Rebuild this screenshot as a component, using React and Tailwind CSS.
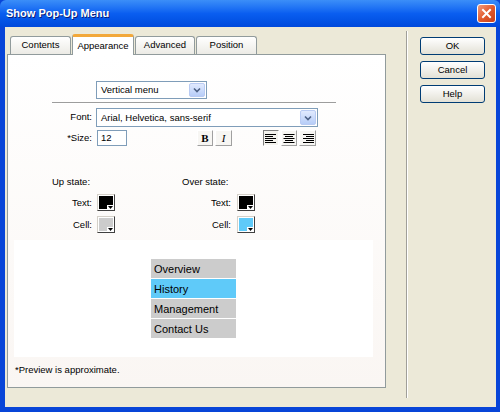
import React from "react";

const ui = { fontFamily: '"Liberation Sans", Arial, sans-serif' };

// little blue drop-down button used by the XP combo boxes
const DropButton = () => (
  <div className="w-[16px] h-full border border-[#b9cbf3] rounded-[2px] bg-gradient-to-b from-[#e1eafe] to-[#b7cdf8] flex items-center justify-center">
    <svg width="8" height="6" viewBox="0 0 8 6">
      <path d="M1 1.5 L4 4.5 L7 1.5" fill="none" stroke="#4d6185" strokeWidth="1.6" />
    </svg>
  </div>
);

const Select = ({ value, className }) => (
  <div className={`flex items-center border border-[#7f9db9] bg-white p-[1px] ${className}`}>
    <span className="flex-1 pl-[3px] text-[9.5px] leading-none text-black">{value}</span>
    <DropButton />
  </div>
);

const Swatch = ({ color }) => (
  <div className="relative w-[18px] h-[17px] border border-t-[#d4d0c8] border-l-[#d4d0c8] border-r-[#404040] border-b-[#404040] bg-white p-[1px]">
    <div className="w-full h-full" style={{ background: color }} />
    <div className="absolute right-0 bottom-0 w-[7px] h-[5px] bg-white flex items-center justify-center">
      <svg width="5" height="3" viewBox="0 0 5 3">
        <path d="M0 0 H5 L2.5 3 Z" fill="#000" />
      </svg>
    </div>
  </div>
);

const AlignIcon = ({ align }) => {
  const widths = [11, 8, 11, 8, 11];
  return (
    <svg width="12" height="11" viewBox="0 0 12 11">
      {widths.map((w, i) => {
        const x = align === "left" ? 0 : align === "right" ? 12 - w : (12 - w) / 2;
        return <rect key={i} x={x} y={i * 2 + 1} width={w} height="1" fill="#000" />;
      })}
    </svg>
  );
};

const ToolBtn = ({ children, pressed, className = "" }) => (
  <div
    className={`h-[16px] flex items-center justify-center border ${
      pressed
        ? "border-t-[#808080] border-l-[#808080] border-r-white border-b-white bg-[#f4f3ee]"
        : "border-t-white border-l-white border-r-[#a0a0a0] border-b-[#a0a0a0] bg-[#f7f6f3]"
    } ${className}`}
  >
    {children}
  </div>
);

const DlgButton = ({ label }) => (
  <div className="w-[65px] h-[18px] rounded-[3px] border border-[#003c74] bg-gradient-to-b from-white to-[#e3e1d6] flex items-center justify-center text-[9.5px] text-black">
    {label}
  </div>
);

const tabs = [
  { label: "Contents", w: "w-[61px]" },
  { label: "Appearance", w: "w-[62px]", active: true },
  { label: "Advanced", w: "w-[60px]" },
  { label: "Position", w: "w-[61px]" },
];

const menuItems = [
  { label: "Overview", bg: "bg-[#cccccc]" },
  { label: "History", bg: "bg-[#5fcaf9]" },
  { label: "Management", bg: "bg-[#cccccc]" },
  { label: "Contact Us", bg: "bg-[#cccccc]" },
];

export default function App() {
  return (
    <div className="w-[500px] h-[412px] flex flex-col bg-[#0845d8] overflow-hidden select-none" style={ui}>
      {/* title bar */}
      <div className="h-[27px] flex items-center justify-between pl-[6px] pr-[4px] bg-gradient-to-b from-[#3b8ef8] via-[#0a5ef0] to-[#0049dc] rounded-t-[6px]">
        <span className="text-white font-bold text-[11px] [text-shadow:1px_1px_0_#0a1e7a]">Show Pop-Up Menu</span>
        <div className="w-[19px] h-[19px] rounded-[3px] border border-white bg-gradient-to-br from-[#f09a7a] via-[#e25a2c] to-[#c8401a] flex items-center justify-center">
          <svg width="11" height="11" viewBox="0 0 11 11">
            <path d="M2 2 L9 9 M9 2 L2 9" stroke="#fff" strokeWidth="2" strokeLinecap="square" />
          </svg>
        </div>
      </div>

      {/* body */}
      <div className="flex-1 flex mx-[4px] ml-[5px] mb-[5px] bg-[#ece9d8]">
        {/* left: tabs + panel */}
        <div className="flex flex-col pl-[2px] pt-[7px] w-[381px]">
          <div className="flex items-end h-[20px] pl-[3px] gap-[1px]">
            {tabs.map((t) =>
              t.active ? (
                <div
                  key={t.label}
                  className={`${t.w} h-[21px] -mb-[1px] relative z-10 border border-b-0 border-[#919b9c] border-t-[3px] border-t-[#f2a83a] rounded-t-[3px] bg-white flex items-center justify-center text-[9.5px] text-black`}
                >
                  {t.label}
                </div>
              ) : (
                <div
                  key={t.label}
                  className={`${t.w} h-[18px] border border-b-0 border-[#919b9c] rounded-t-[3px] bg-gradient-to-b from-white to-[#ecebe5] flex items-center justify-center text-[9.5px] text-black`}
                >
                  {t.label}
                </div>
              )
            )}
          </div>

          <div className="w-[379px] h-[334px] border border-[#919b9c] bg-gradient-to-b from-white to-[#faf6f3] flex flex-col text-[9.5px] text-black">
            <Select value="Vertical menu" className="mt-[26px] ml-[88px] w-[111px] h-[18px]" />
            <div className="mt-[3px] ml-[44px] w-[284px] border-t border-[#9d9d9d] border-b border-b-white" />

            <div className="mt-[4px] flex items-center h-[19px]">
              <span className="w-[84px] text-right">Font:</span>
              <Select value="Arial, Helvetica, sans-serif" className="ml-[4px] w-[222px] h-[19px]" />
            </div>

            <div className="mt-[3px] flex items-center h-[16px]">
              <span className="w-[84px] text-right">*Size:</span>
              <div className="ml-[5px] w-[30px] h-[16px] border border-[#7f9db9] bg-white flex items-center pl-[3px]">12</div>
              <ToolBtn className="ml-[70px] w-[16px]">
                <span className="font-bold text-[11px]" style={{ fontFamily: '"Liberation Serif", serif' }}>B</span>
              </ToolBtn>
              <ToolBtn className="ml-[2px] w-[17px]">
                <span className="italic text-[11px]" style={{ fontFamily: '"Liberation Serif", serif' }}>I</span>
              </ToolBtn>
              <ToolBtn pressed className="ml-[31px] w-[16px]">
                <AlignIcon align="left" />
              </ToolBtn>
              <ToolBtn className="ml-[2px] w-[16px]">
                <AlignIcon align="center" />
              </ToolBtn>
              <ToolBtn className="ml-[2px] w-[17px]">
                <AlignIcon align="right" />
              </ToolBtn>
            </div>

            <div className="mt-[29px] flex items-center pl-[44px]">
              <span className="w-[130px]">Up state:</span>
              <span>Over state:</span>
            </div>

            <div className="mt-[5px] flex items-center">
              <span className="w-[84px] text-right">Text:</span>
              <div className="ml-[5px]"><Swatch color="#000000" /></div>
              <span className="w-[116px] text-right">Text:</span>
              <div className="ml-[6px]"><Swatch color="#000000" /></div>
            </div>

            <div className="mt-[5px] flex items-center">
              <span className="w-[84px] text-right">Cell:</span>
              <div className="ml-[5px]"><Swatch color="#cccccc" /></div>
              <span className="w-[116px] text-right">Cell:</span>
              <div className="ml-[6px]"><Swatch color="#5fcaf9" /></div>
            </div>

            {/* preview */}
            <div className="mt-[7px] ml-[6px] w-[359px] h-[117px] bg-white flex flex-col pt-[19px] pl-[137px]">
              <div className="flex flex-col gap-[1px] w-[85px]">
                {menuItems.map((m) => (
                  <div key={m.label} className={`${m.bg} h-[19px] flex items-center pl-[3px] text-[11px] text-black`}>
                    {m.label}
                  </div>
                ))}
              </div>
            </div>

            <div className="mt-[6px] ml-[7px]">*Preview is approximate.</div>
          </div>
        </div>

        {/* separator */}
        <div className="ml-[20px] mt-[4px] mb-[9px] flex">
          <div className="w-px h-full bg-[#a09f99]" />
          <div className="w-px h-full bg-white" />
        </div>

        {/* buttons */}
        <div className="ml-[12px] pt-[10px] flex flex-col gap-[6px]">
          <DlgButton label="OK" />
          <DlgButton label="Cancel" />
          <DlgButton label="Help" />
        </div>
      </div>
    </div>
  );
}
